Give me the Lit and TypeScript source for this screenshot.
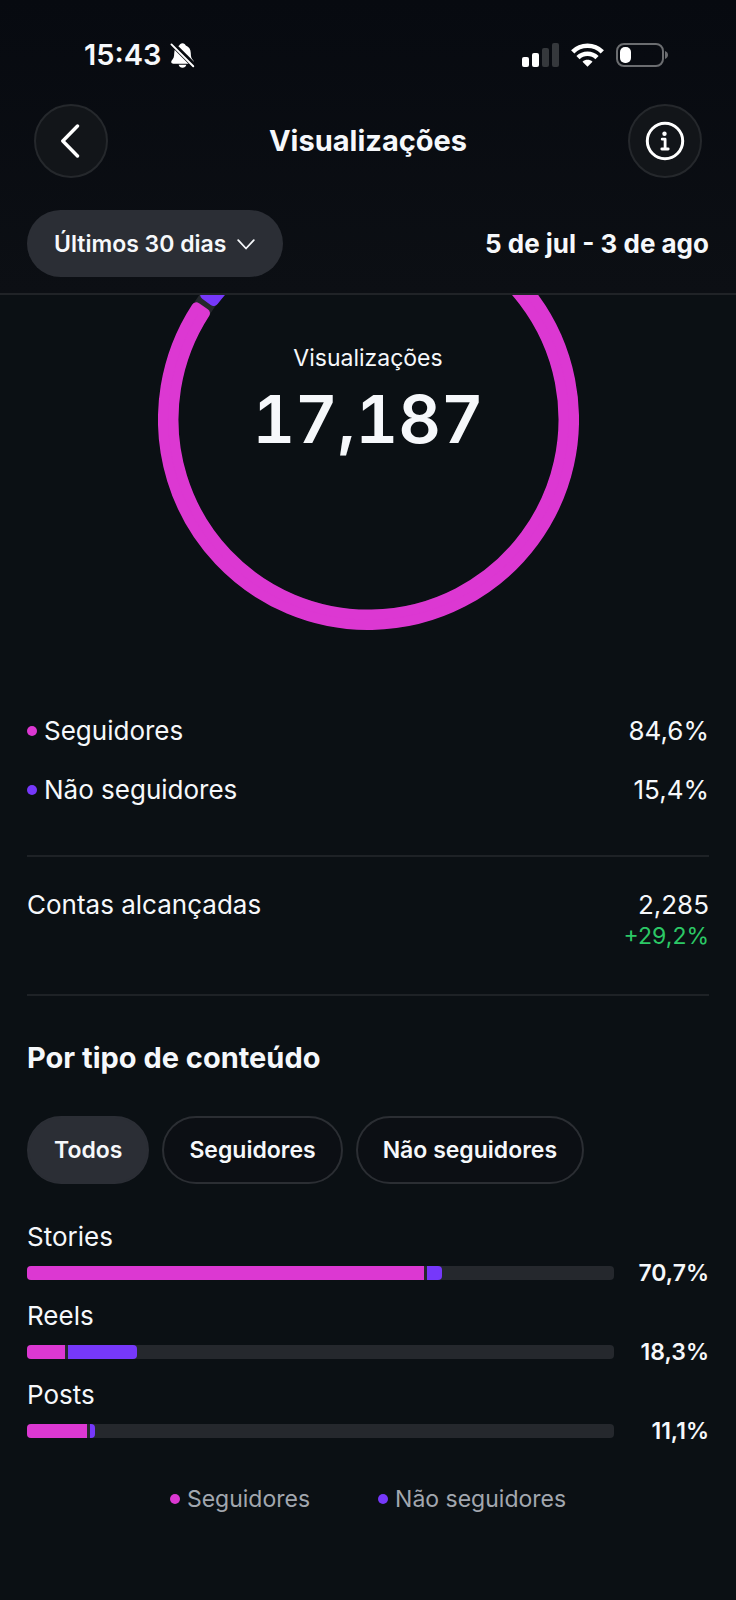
import { LitElement, html, css, svg } from "lit";
import { customElement, property, state } from "lit/decorators.js";

type Audience = "followers" | "others";

const RING = { cx: 210.5, cy: 124.5, outer: 210.5, inner: 190, soft: 5 };

/** Ring sector between two angles (degrees clockwise from the top), inset so a round-joined stroke softens its corners. */
function sector(from: number, to: number): string {
  const { cx, cy, outer, inner, soft } = RING;
  const point = (radius: number, degrees: number, inset: number) => {
    const a = (degrees * Math.PI) / 180 + inset / radius;
    return `${(cx + radius * Math.sin(a)).toFixed(2)} ${(cy - radius * Math.cos(a)).toFixed(2)}`;
  };
  const ro = outer - soft;
  const ri = inner + soft;
  const large = to - from > 180 ? 1 : 0;
  return `M${point(ro, from, soft)}A${ro} ${ro} 0 ${large} 1 ${point(ro, to, -soft)}L${point(ri, to, -soft)}A${ri} ${ri} 0 ${large} 0 ${point(ri, from, soft)}Z`;
}

@customElement("status-bar")
export class StatusBar extends LitElement {
  static styles = css`
    :host {
      display: flex;
      justify-content: space-between;
      align-items: center;
      padding: 37px 68px 31px 84px;
      line-height: 36px;
    }
    .clock,
    .signals {
      display: flex;
      align-items: center;
    }
    .clock {
      gap: 8px;
      font-size: 29px;
      font-weight: 600;
    }
    .signals {
      gap: 12px;
    }
    svg {
      display: block;
    }
  `;

  render() {
    return html`
      <div class="clock">
        <time>15:43</time>
        <svg width="25" height="27" viewBox="0 0 26 28" role="img" aria-label="Silencioso">
          <path d="M13 1.2c1.7 0 3 1 3.4 2.5 3.3 1.2 5.2 4 5.2 7.8 0 4.200 .8 5.700 2.200 7.300 .7.8.9 1.300.9 1.900 0 1.100-.9 1.800-2.200 1.800H3.500c-1.300 0-2.200-.7-2.200-1.800 0-.6.2-1.100.9-1.900 1.400-1.600 2.200-3.100 2.200-7.300 0-3.800 1.900-6.600 5.200-7.800C10 2.200 11.300 1.200 13 1.200z" fill="#fff" />
          <path d="M9 23.600h8c-.5 1.900-2 3.100-4 3.100s-3.500-1.200-4-3.100z" fill="#fff" />
          <path d="M1 .5 26 25.500" stroke="#080b10" stroke-width="5.500" />
          <path d="M1.500 2.500 24.200 25.200" stroke="#fff" stroke-width="2" stroke-linecap="round" />
        </svg>
      </div>
      <div class="signals">
        <svg width="37" height="24" viewBox="0 0 37 24" role="img" aria-label="Sinal">
          <rect x="0" y="14" width="7" height="10" rx="2" fill="#fff" />
          <rect x="10" y="10" width="7" height="14" rx="2" fill="#fff" />
          <rect x="20" y="5" width="7" height="19" rx="2" fill="#35383c" />
          <rect x="30" y="0" width="7" height="24" rx="2" fill="#35383c" />
        </svg>
        <svg width="33" height="24" viewBox="0 0 33 24" role="img" aria-label="Wi-Fi">
          <g fill="none" stroke="#fff" stroke-width="4.600">
            <path d="M1.700 8.900a21 21 0 0 1 29.600 0" />
            <path d="M7 14.600a13.500 13.500 0 0 1 19 0" />
          </g>
          <path d="M16.500 23.800l-5-5.100c2.900-2.500 7.100-2.500 10 0z" fill="#fff" />
        </svg>
        <svg width="52" height="24" viewBox="0 0 52 24" role="img" aria-label="Bateria">
          <rect x="1" y="1" width="46" height="22" rx="7" fill="none" stroke="#6b6d70" stroke-width="2" />
          <rect x="4" y="4" width="11" height="16" rx="5" fill="#fff" />
          <path d="M49 8c2 .8 3 2.200 3 4s-1 3.200-3 4z" fill="#6b6d70" />
        </svg>
      </div>
    `;
  }
}

@customElement("views-ring")
export class ViewsRing extends LitElement {
  @property({ type: Number }) others = 0;

  static styles = css`
    :host {
      display: grid;
      justify-items: center;
    }
    .ring,
    .center {
      grid-area: 1 / 1;
    }
    .ring {
      display: block;
    }
    .center {
      padding-top: 47px;
      text-align: center;
    }
    .label {
      font-size: 23px;
      line-height: 32px;
    }
    .total {
      font-size: 66px;
      line-height: 90px;
      font-weight: 600;
      font-variant-numeric: tabular-nums;
    }
  `;

  render() {
    const { cx, cy, outer, inner, soft } = RING;
    const edge = 360 - this.others * 3.6;
    const part = (color: string, from: number, to: number) =>
      svg`<path d=${sector(from, to)} fill=${color} stroke=${color} stroke-width=${soft * 2} stroke-linejoin="round"/>`;
    return html`
      <svg class="ring" width="421" height="335" viewBox="0 0 421 335" aria-hidden="true">
        <circle cx=${cx} cy=${cy} r=${(outer + inner) / 2} fill="none" stroke="#25282d" stroke-width=${outer - inner - 1} />
        ${part("#dc38d2", 1, edge - 0.1)} ${part("#7638fa", edge + 1.4, 359)}
      </svg>
      <div class="center">
        <div class="label">Visualizações</div>
        <div class="total">17,187</div>
      </div>
    `;
  }
}

@customElement("share-bar")
export class ShareBar extends LitElement {
  @property() name = "";
  @property() total = "";
  @property({ type: Number }) followers = 0;
  @property({ type: Number }) others = 0;

  static styles = css`
    :host {
      display: grid;
      gap: 4px;
      line-height: 32px;
    }
    .name {
      font-size: 26px;
    }
    .line {
      display: grid;
      grid-template-columns: 1fr 95px;
      align-items: center;
    }
    .track {
      display: flex;
      gap: 3px;
      height: 14px;
      border-radius: 4px;
      background: #25282d;
      overflow: hidden;
    }
    .followers {
      background: #dc38d2;
    }
    .others {
      background: #7638fa;
      border-radius: 0 4px 4px 0;
    }
    .total {
      font-size: 23px;
      font-weight: 600;
      text-align: right;
    }
  `;

  render() {
    return html`
      <div class="name">${this.name}</div>
      <div class="line">
        <div class="track">
          <div class="followers" style="width:${this.followers}%"></div>
          <div class="others" style="width:${this.others}%"></div>
        </div>
        <div class="total">${this.total}</div>
      </div>
    `;
  }
}

@customElement("app-root")
export class AppRoot extends LitElement {
  @state() private filter = "Todos";

  static styles = css`
    :host {
      display: block;
      min-height: 100vh;
      box-sizing: border-box;
      background: #0b1014;
      color: #f6f8fb;
      font-family: Inter, "Liberation Sans", sans-serif;
    }
    h1,
    h2 {
      margin: 0;
    }
    button,
    select {
      font: inherit;
      color: inherit;
      cursor: pointer;
    }
    .top {
      background: linear-gradient(#070a10, #0c0f14);
      border-bottom: 2px solid #202327;
    }
    .nav {
      display: flex;
      align-items: center;
      justify-content: space-between;
      padding: 0 34px;
    }
    .title {
      font-size: 29px;
      line-height: 36px;
      font-weight: 700;
    }
    .round {
      display: grid;
      place-items: center;
      width: 74px;
      height: 74px;
      padding: 0;
      border: 2px solid #25282c;
      border-radius: 50%;
      background: #121519;
    }
    .period {
      display: flex;
      align-items: center;
      justify-content: space-between;
      padding: 32px 27px 16px;
    }
    .picker {
      position: relative;
    }
    .picker select {
      appearance: none;
      height: 67px;
      padding: 0 56px 0 27px;
      border: 0;
      border-radius: 34px;
      background: #2b2e35;
      font-size: 23px;
      font-weight: 600;
    }
    .chevron {
      position: absolute;
      right: 28px;
      top: 29px;
      pointer-events: none;
    }
    .range {
      font-size: 26px;
      font-weight: 700;
    }
    .content {
      padding: 0 27px;
    }
    .split {
      padding: 71px 0 36px;
      border-bottom: 2px solid #1e2226;
      font-size: 26px;
      line-height: 59px;
    }
    .row {
      display: flex;
      justify-content: space-between;
    }
    .key {
      display: flex;
      align-items: center;
      gap: 7px;
    }
    .dot {
      width: 10px;
      height: 10px;
      border-radius: 50%;
      background: #dc38d2;
    }
    .dot.others {
      background: #7638fa;
    }
    .reach {
      padding: 32px 0 43px;
      border-bottom: 2px solid #1e2226;
      font-size: 26px;
      line-height: 32px;
    }
    .figures {
      text-align: right;
    }
    .growth {
      color: #2cc866;
      font-size: 23px;
      line-height: 30px;
    }
    .heading {
      padding: 44px 0 40px;
      font-size: 29px;
      line-height: 36px;
      font-weight: 700;
    }
    .chips {
      display: flex;
      flex-wrap: wrap;
      gap: 13px;
      padding-bottom: 37px;
    }
    .chip {
      height: 68px;
      padding: 0 25px;
      border: 2px solid #2b2e33;
      border-radius: 34px;
      background: #0c0f14;
      font-size: 23px;
      font-weight: 600;
    }
    .chip.on {
      border-color: #2b2e35;
      background: #2b2e35;
    }
    .bars {
      display: grid;
      gap: 11px;
    }
    .legend {
      display: flex;
      justify-content: center;
      gap: 68px;
      padding: 36px 0;
      color: #a2a7af;
      font-size: 23px;
      line-height: 32px;
    }
  `;

  private key(kind: Audience, label: string) {
    return html`<span class="key"><i class="dot ${kind}"></i>${label}</span>`;
  }

  render() {
    return html`
      <header class="top">
        <status-bar></status-bar>
        <div class="nav">
          <button class="round" aria-label="Voltar">
            <svg width="20" height="34" viewBox="0 0 20 34" fill="none" stroke="#fff" stroke-width="3.400" stroke-linecap="round" stroke-linejoin="round">
              <path d="M16.500 2 1.800 17l14.700 15" />
            </svg>
          </button>
          <h1 class="title">Visualizações</h1>
          <button class="round" aria-label="Informações">
            <svg width="40" height="40" viewBox="0 0 40 40" fill="none" stroke="#fff" stroke-linecap="round" stroke-linejoin="round">
              <circle cx="20" cy="20" r="17.700" stroke-width="3" />
              <circle cx="19.500" cy="12.700" r="2.200" fill="#fff" stroke="none" />
              <path d="M17.200 18.200h2.900v9.700M16.800 28h6.400" stroke-width="2.800" />
            </svg>
          </button>
        </div>
        <div class="period">
          <div class="picker">
            <select aria-label="Período">
              <option>Últimos 30 dias</option>
            </select>
            <svg class="chevron" width="18" height="11" viewBox="0 0 18 11" fill="none" stroke="#f6f8fb" stroke-width="1.800" stroke-linecap="round" stroke-linejoin="round">
              <path d="M1.200 1.200 9 9.500l7.800-8.300" />
            </svg>
          </div>
          <div class="range">5 de jul - 3 de ago</div>
        </div>
      </header>

      <main class="content">
        <views-ring .others=${15.4}></views-ring>

        <div class="split">
          <div class="row">${this.key("followers", "Seguidores")}<span>84,6%</span></div>
          <div class="row">${this.key("others", "Não seguidores")}<span>15,4%</span></div>
        </div>

        <div class="reach row">
          <span>Contas alcançadas</span>
          <div class="figures">
            <div>2,285</div>
            <div class="growth">+29,2%</div>
          </div>
        </div>

        <h2 class="heading">Por tipo de conteúdo</h2>
        <div class="chips">
          ${["Todos", "Seguidores", "Não seguidores"].map(
            (name) => html`<button
              class="chip ${this.filter === name ? "on" : ""}"
              aria-pressed=${this.filter === name ? "true" : "false"}
              @click=${() => (this.filter = name)}
            >${name}</button>`
          )}
        </div>

        <div class="bars">
          <share-bar name="Stories" total="70,7%" .followers=${67.6} .others=${2.6}></share-bar>
          <share-bar name="Reels" total="18,3%" .followers=${6.4} .others=${11.8}></share-bar>
          <share-bar name="Posts" total="11,1%" .followers=${10.2} .others=${0.9}></share-bar>
        </div>

        <div class="legend">${this.key("followers", "Seguidores")}${this.key("others", "Não seguidores")}</div>
      </main>
    `;
  }
}
